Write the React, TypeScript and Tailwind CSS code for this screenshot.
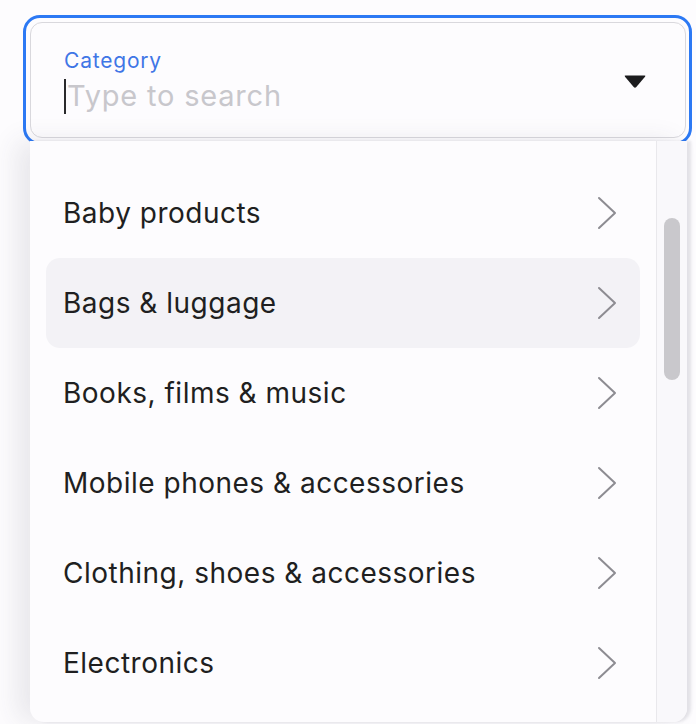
import React from "react";

const items = [
  "Baby products",
  "Bags & luggage",
  "Books, films & music",
  "Mobile phones & accessories",
  "Clothing, shoes & accessories",
  "Electronics",
];

function Chevron() {
  return (
    <svg width="22" height="34" viewBox="0 0 22 34" fill="none" className="shrink-0">
      <polyline points="3,2 19,17 3,32" stroke="#8d8c92" strokeWidth="2" strokeLinecap="round" strokeLinejoin="round" />
    </svg>
  );
}

export default function App() {
  return (
    <div
      className="relative w-[696px] h-[724px] overflow-hidden bg-[#fdfcfe]"
      style={{ fontFamily: "Inter, 'Noto Sans', sans-serif" }}
    >
      <div className="pt-[15px] pl-[23px]">
        <div className="w-[669px] h-[130px] rounded-[17px] border-[3px] border-[#2c79f4] pt-[4px] pl-[4px] pr-[3px] pb-[4px]">
          <div className="h-full rounded-[12px] border-[1.5px] border-[#d9d8dd] bg-[#fdfcfe] flex items-center pl-[33px] pr-[38px]">
            <div className="flex-1 flex flex-col pt-[4px]">
              <span className="text-[21px] leading-[26px] text-[#3f76e6] tracking-[0.8px]">Category</span>
              <div className="flex items-center h-[40px] mt-[2px]">
                <span className="w-[2px] h-[35px] bg-[#2a2a2c] mr-[1px]" />
                <span className="text-[29px] leading-[40px] text-[#c8c7cc] tracking-[0.8px]">Type to search</span>
              </div>
            </div>
            <svg width="24" height="15" viewBox="0 0 24 15" className="shrink-0 mt-[2px]">
              <path d="M2.5 1.5 H21.5 Q23 1.5 22 2.8 L13.3 13 Q12 14.3 10.7 13 L2 2.8 Q1 1.5 2.5 1.5 Z" fill="#1c1c1e" />
            </svg>
          </div>
        </div>
      </div>

      <div className="absolute left-[30px] top-[141px] w-[657px] h-[581px] rounded-b-[14px] bg-[#fdfcfe] flex shadow-[-14px_0_26px_rgba(60,60,80,0.1),4px_0_3px_rgba(60,60,80,0.12)]">
        <div className="flex-1 pt-[27px] px-[16px]">
          {items.map((it, i) => (
            <div
              key={it}
              className={
                "h-[90px] flex items-center justify-between pl-[17px] pr-[22px] rounded-[14px] " +
                (i === 1 ? "bg-[#f3f2f6]" : "")
              }
            >
              <span className="text-[28px] text-[#1f1f21] tracking-[0.5px]">{it}</span>
              <Chevron />
            </div>
          ))}
        </div>
        <div className="w-[31px] border-l border-[#e9e8ec] bg-[#f9f8fb] rounded-br-[14px] pt-[77px] pl-[7px]">
          <div className="w-[16px] h-[162px] rounded-full bg-[#c9c8cc]" />
        </div>
      </div>
    </div>
  );
}
